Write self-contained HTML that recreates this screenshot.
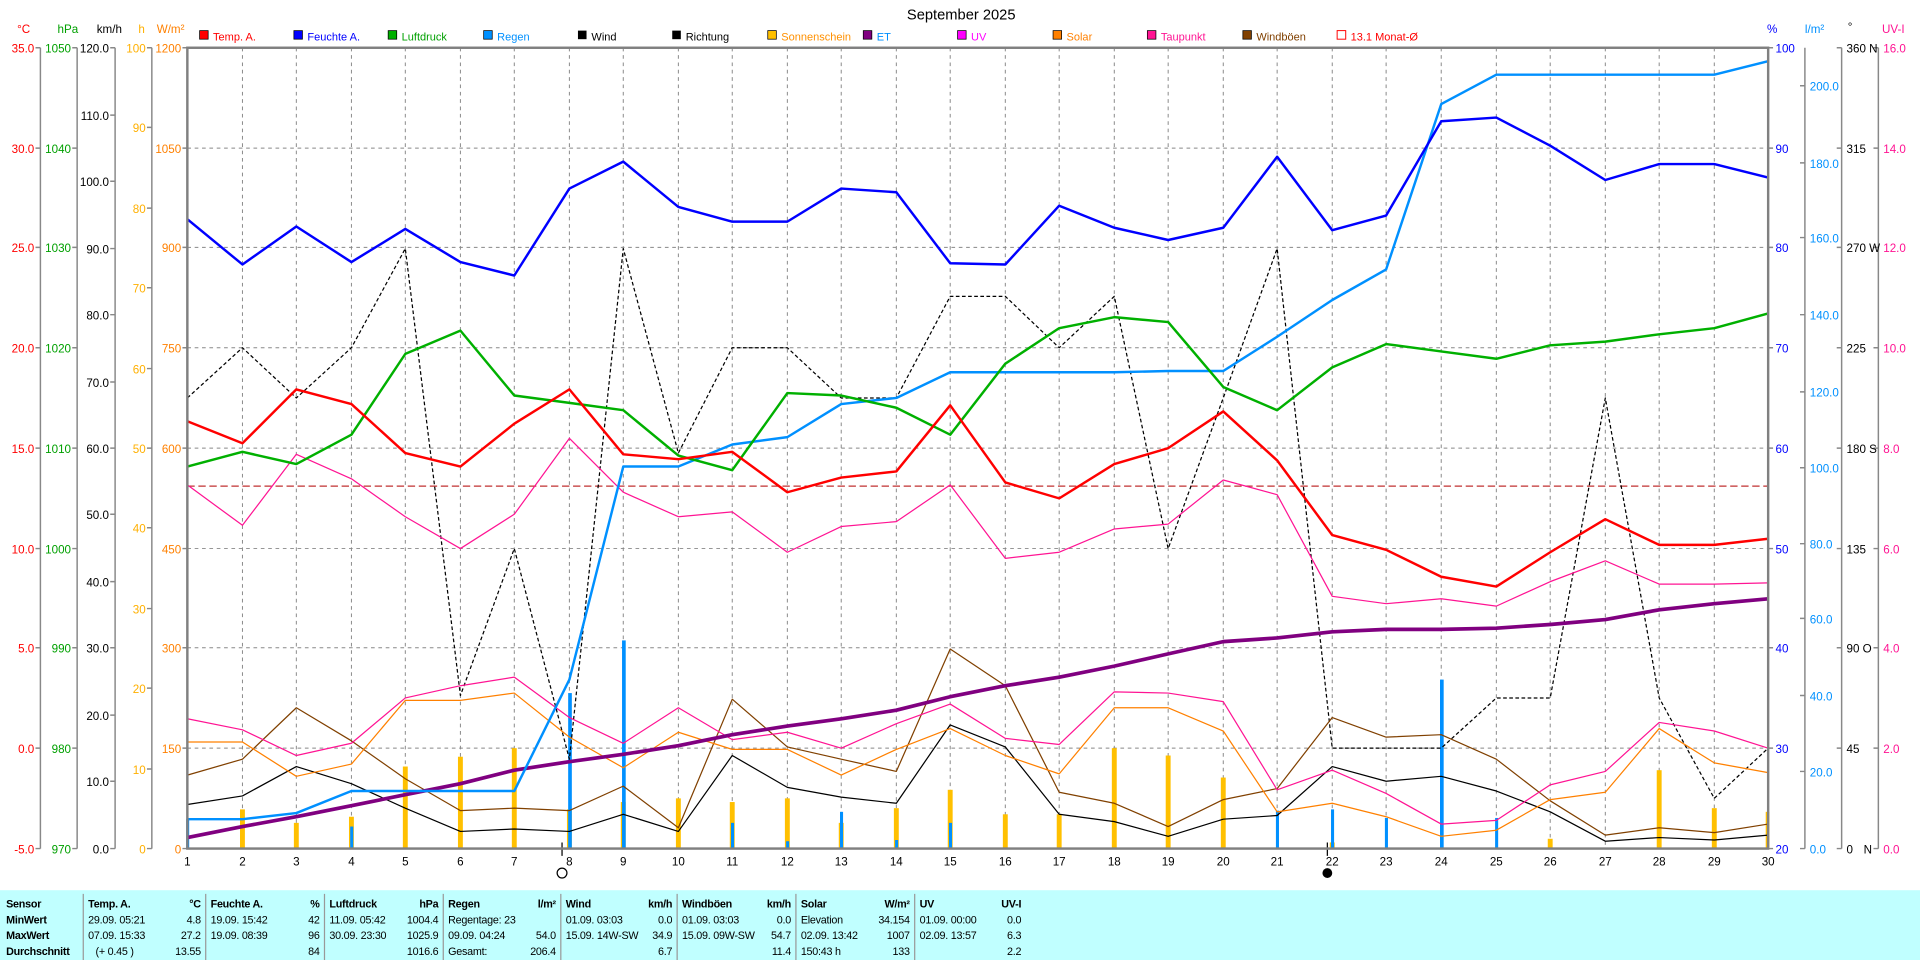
<!DOCTYPE html>
<html><head><meta charset="utf-8"><style>
html,body{margin:0;padding:0;background:#fff;width:1920px;height:960px;overflow:hidden}
svg{display:block;font-family:"Liberation Sans",sans-serif}
</style></head><body>
<svg width="1920" height="960" viewBox="0 0 1568 784" preserveAspectRatio="none" xmlns="http://www.w3.org/2000/svg">
<rect width="1568" height="784" fill="#fff"/>
<text x="785" y="16" font-size="12" text-anchor="middle">September 2025</text>
<g font-size="9">
<rect x="163" y="25" width="7" height="7" fill="#f00" stroke="#000" stroke-width=".6"/><text x="174" y="33" fill="#f00">Temp. A.</text>
<rect x="240" y="25" width="7" height="7" fill="#00f" stroke="#000" stroke-width=".6"/><text x="251" y="33" fill="#00f">Feuchte A.</text>
<rect x="317" y="25" width="7" height="7" fill="#00b000" stroke="#000" stroke-width=".6"/><text x="328" y="33" fill="#00a000">Luftdruck</text>
<rect x="395" y="25" width="7" height="7" fill="#0090ff" stroke="#000" stroke-width=".6"/><text x="406" y="33" fill="#0090ff">Regen</text>
<rect x="472" y="25" width="7" height="7" fill="#000"/><text x="483" y="33">Wind</text>
<rect x="549" y="25" width="7" height="7" fill="#000"/><text x="560" y="33">Richtung</text>
<rect x="627" y="25" width="7" height="7" fill="#ffc000" stroke="#000" stroke-width=".6"/><text x="638" y="33" fill="#ff9000">Sonnenschein</text>
<rect x="705" y="25" width="7" height="7" fill="#800080" stroke="#000" stroke-width=".6"/><text x="716" y="33" fill="#0090ff">ET</text>
<rect x="782" y="25" width="7" height="7" fill="#ff00ff" stroke="#000" stroke-width=".6"/><text x="793" y="33" fill="#ff00ff">UV</text>
<rect x="860" y="25" width="7" height="7" fill="#ff8000" stroke="#000" stroke-width=".6"/><text x="871" y="33" fill="#ff8000">Solar</text>
<rect x="937" y="25" width="7" height="7" fill="#ff1493" stroke="#000" stroke-width=".6"/><text x="948" y="33" fill="#ff1493">Taupunkt</text>
<rect x="1015" y="25" width="7" height="7" fill="#804000" stroke="#000" stroke-width=".6"/><text x="1026" y="33" fill="#804000">Windböen</text>
<rect x="1092" y="25" width="7" height="7" fill="#fff" stroke="#f00" stroke-width=".8"/><text x="1103" y="33" fill="#f00">13.1 Monat-Ø</text>
</g>
<g stroke="#888" stroke-width=".8" stroke-dasharray="3,3">
<path d="M153 121H1444M153 202H1444M153 284H1444M153 366H1444M153 448H1444M153 529H1444M153 611H1444"/>
<path d="M198 39V693M242 39V693M287 39V693M331 39V693M376 39V693M420 39V693M465 39V693M509 39V693M554 39V693M598 39V693M643 39V693M687 39V693M732 39V693M776 39V693M821 39V693M865 39V693M910 39V693M954 39V693M999 39V693M1043 39V693M1088 39V693M1132 39V693M1177 39V693M1222 39V693M1266 39V693M1311 39V693M1355 39V693M1400 39V693"/>
</g>
<g stroke="#888" stroke-width="1.2" fill="none">
<path d="M33 39V693M63 39V693M94 39V693M124 39V693M1474 39V693M1504 39V693M1534 39V693"/>
<path d="M29 39H33M29 121H33M29 202H33M29 284H33M29 366H33M29 448H33M29 529H33M29 611H33M29 693H33"/>
<path d="M59 39H63M59 121H63M59 202H63M59 284H63M59 366H63M59 448H63M59 529H63M59 611H63M59 693H63"/>
<path d="M90 39H94M90 94H94M90 148H94M90 203H94M90 257H94M90 312H94M90 366H94M90 420H94M90 475H94M90 529H94M90 584H94M90 638H94M90 693H94"/>
<path d="M120 39H124M120 104H124M120 170H124M120 235H124M120 301H124M120 366H124M120 431H124M120 497H124M120 562H124M120 628H124M120 693H124"/>
<path d="M149 39H153M149 121H153M149 202H153M149 284H153M149 366H153M149 448H153M149 529H153M149 611H153M149 693H153"/>
<path d="M1444 39H1448M1444 121H1448M1444 202H1448M1444 284H1448M1444 366H1448M1444 448H1448M1444 529H1448M1444 611H1448M1444 693H1448"/>
<path d="M1470 70H1474M1470 133H1474M1470 194H1474M1470 257H1474M1470 320H1474M1470 382H1474M1470 444H1474M1470 505H1474M1470 568H1474M1470 630H1474M1470 693H1474"/>
<path d="M1500 39H1504M1500 121H1504M1500 202H1504M1500 284H1504M1500 366H1504M1500 448H1504M1500 529H1504M1500 611H1504M1500 693H1504"/>
<path d="M1530 39H1534M1530 121H1534M1530 202H1534M1530 284H1534M1530 366H1534M1530 448H1534M1530 529H1534M1530 611H1534M1530 693H1534"/>
</g>
<g font-size="9.5" text-anchor="end">
<g fill="#f00"><text x="28" y="43">35.0</text><text x="28" y="125">30.0</text><text x="28" y="206">25.0</text><text x="28" y="288">20.0</text><text x="28" y="370">15.0</text><text x="28" y="452">10.0</text><text x="28" y="533">5.0</text><text x="28" y="615">0.0</text><text x="28" y="697">-5.0</text></g>
<g fill="#00a000"><text x="58" y="43">1050</text><text x="58" y="125">1040</text><text x="58" y="206">1030</text><text x="58" y="288">1020</text><text x="58" y="370">1010</text><text x="58" y="452">1000</text><text x="58" y="533">990</text><text x="58" y="615">980</text><text x="58" y="697">970</text></g>
<g fill="#000"><text x="89" y="43">120.0</text><text x="89" y="98">110.0</text><text x="89" y="152">100.0</text><text x="89" y="207">90.0</text><text x="89" y="261">80.0</text><text x="89" y="316">70.0</text><text x="89" y="370">60.0</text><text x="89" y="424">50.0</text><text x="89" y="479">40.0</text><text x="89" y="533">30.0</text><text x="89" y="588">20.0</text><text x="89" y="642">10.0</text><text x="89" y="697">0.0</text></g>
<g fill="#ffb000"><text x="119" y="43">100</text><text x="119" y="108">90</text><text x="119" y="174">80</text><text x="119" y="239">70</text><text x="119" y="305">60</text><text x="119" y="370">50</text><text x="119" y="435">40</text><text x="119" y="501">30</text><text x="119" y="566">20</text><text x="119" y="632">10</text><text x="119" y="697">0</text></g>
<g fill="#ff8000"><text x="148" y="43">1200</text><text x="148" y="125">1050</text><text x="148" y="206">900</text><text x="148" y="288">750</text><text x="148" y="370">600</text><text x="148" y="452">450</text><text x="148" y="533">300</text><text x="148" y="615">150</text><text x="148" y="697">0</text></g>
</g>
<g font-size="9.5">
<text x="14" y="27" fill="#f00">°C</text><text x="47" y="27" fill="#00a000">hPa</text><text x="79" y="27">km/h</text><text x="113" y="27" fill="#ffb000">h</text><text x="128" y="27" fill="#ff8000">W/m²</text>
<text x="1443" y="27" fill="#00f">%</text><text x="1474" y="27" fill="#0090ff">l/m²</text><text x="1509" y="25">°</text><text x="1537" y="27" fill="#ff1493">UV-I</text>
<g fill="#00f"><text x="1450" y="43">100</text><text x="1450" y="125">90</text><text x="1450" y="206">80</text><text x="1450" y="288">70</text><text x="1450" y="370">60</text><text x="1450" y="452">50</text><text x="1450" y="533">40</text><text x="1450" y="615">30</text><text x="1450" y="697">20</text></g>
<g fill="#0090ff"><text x="1478" y="74">200.0</text><text x="1478" y="137">180.0</text><text x="1478" y="198">160.0</text><text x="1478" y="261">140.0</text><text x="1478" y="324">120.0</text><text x="1478" y="386">100.0</text><text x="1478" y="448">80.0</text><text x="1478" y="509">60.0</text><text x="1478" y="572">40.0</text><text x="1478" y="634">20.0</text><text x="1478" y="697">0.0</text></g>
<g><text x="1508" y="43">360 N</text><text x="1508" y="125">315</text><text x="1508" y="206">270 W</text><text x="1508" y="288">225</text><text x="1508" y="370">180 S</text><text x="1508" y="452">135</text><text x="1508" y="533">90 O</text><text x="1508" y="615">45</text><text x="1508" y="697">0</text><text x="1522" y="697">N</text></g>
<g fill="#ff1493"><text x="1538" y="43">16.0</text><text x="1538" y="125">14.0</text><text x="1538" y="206">12.0</text><text x="1538" y="288">10.0</text><text x="1538" y="370">8.0</text><text x="1538" y="452">6.0</text><text x="1538" y="533">4.0</text><text x="1538" y="615">2.0</text><text x="1538" y="697">0.0</text></g>
</g>
<g font-size="9.5" text-anchor="middle">
<text x="153" y="707">1</text><text x="198" y="707">2</text><text x="242" y="707">3</text><text x="287" y="707">4</text><text x="331" y="707">5</text><text x="376" y="707">6</text><text x="420" y="707">7</text><text x="465" y="707">8</text><text x="509" y="707">9</text><text x="554" y="707">10</text><text x="598" y="707">11</text><text x="643" y="707">12</text><text x="687" y="707">13</text><text x="732" y="707">14</text><text x="776" y="707">15</text><text x="821" y="707">16</text><text x="865" y="707">17</text><text x="910" y="707">18</text><text x="954" y="707">19</text><text x="999" y="707">20</text><text x="1043" y="707">21</text><text x="1088" y="707">22</text><text x="1132" y="707">23</text><text x="1177" y="707">24</text><text x="1222" y="707">25</text><text x="1266" y="707">26</text><text x="1311" y="707">27</text><text x="1355" y="707">28</text><text x="1400" y="707">29</text><text x="1444" y="707">30</text>
</g>
<path d="M459 688V699M1084 688V699" stroke="#000"/>
<circle cx="459" cy="713" r="4" fill="none" stroke="#000"/>
<circle cx="1084" cy="713" r="4" fill="#000"/>
<g fill="#ffc000">
<rect x="196" y="661" width="4" height="32"/><rect x="240" y="672" width="4" height="21"/><rect x="285" y="667" width="4" height="26"/><rect x="329" y="626" width="4" height="67"/><rect x="374" y="618" width="4" height="75"/><rect x="418" y="611" width="4" height="82"/><rect x="463" y="661" width="4" height="32"/><rect x="507" y="655" width="4" height="38"/><rect x="552" y="652" width="4" height="41"/><rect x="596" y="655" width="4" height="38"/><rect x="641" y="652" width="4" height="41"/><rect x="685" y="672" width="4" height="21"/><rect x="730" y="660" width="4" height="33"/><rect x="774" y="645" width="4" height="48"/><rect x="819" y="665" width="4" height="28"/><rect x="863" y="665" width="4" height="28"/><rect x="908" y="611" width="4" height="82"/><rect x="952" y="617" width="4" height="76"/><rect x="997" y="635" width="4" height="58"/><rect x="1086" y="688" width="4" height="5"/><rect x="1264" y="685" width="4" height="8"/><rect x="1353" y="629" width="4" height="64"/><rect x="1398" y="660" width="4" height="33"/><rect x="1442" y="663" width="3" height="30"/>
</g>
<g fill="#0090ff">
<rect x="152" y="669" width="2.5" height="24"/><rect x="286" y="675" width="2.5" height="18"/><rect x="464" y="566" width="3" height="127"/><rect x="508" y="523" width="3" height="170"/><rect x="597" y="672" width="2.5" height="21"/><rect x="642" y="687" width="2.5" height="6"/><rect x="686" y="663" width="2.5" height="30"/><rect x="731" y="686" width="2.5" height="7"/><rect x="775" y="672" width="2.5" height="21"/><rect x="1042" y="662" width="2.5" height="31"/><rect x="1087" y="661" width="2.5" height="32"/><rect x="1131" y="668" width="2.5" height="25"/><rect x="1176" y="555" width="3" height="138"/><rect x="1221" y="668" width="2.5" height="25"/>
</g>
<g fill="none" stroke-linejoin="round">
<path d="M153 397H1444" stroke="#c03030" stroke-width="1" stroke-dasharray="6,3"/>
<polyline stroke="#000" stroke-width="1" stroke-dasharray="3,2" points="153,325 198,284 242,325 287,284 331,203 376,568 420,448 465,620 509,203 554,370 598,284 643,284 687,325 732,325 776,242 821,242 865,284 910,242 954,448 999,325 1043,203 1088,611 1132,611 1177,611 1222,570 1266,570 1311,325 1355,570 1400,652 1444,611"/>
<polyline stroke="#000" stroke-width="1" points="153,657 198,650 242,626 287,640 331,660 376,679 420,677 465,679 509,665 554,679 598,617 643,643 687,651 732,656 776,592 821,610 865,665 910,671 954,683 999,669 1043,666 1088,626 1132,638 1177,634 1222,646 1266,663 1311,687 1355,684 1400,686 1444,682"/>
<polyline stroke="#804000" stroke-width="1" points="153,633 198,620 242,578 287,605 331,636 376,662 420,660 465,662 509,642 554,676 598,571 643,610 687,620 732,630 776,530 821,560 865,647 910,656 954,675 999,653 1043,644 1088,586 1132,602 1177,600 1222,620 1266,654 1311,682 1355,676 1400,680 1444,673"/>
<polyline stroke="#ff8000" stroke-width="1" points="153,606 198,606 242,634 287,624 331,572 376,572 420,566 465,602 509,627 554,598 598,612 643,612 687,633 732,612 776,595 821,617 865,632 910,578 954,578 999,597 1043,663 1088,656 1132,667 1177,683 1222,678 1266,653 1311,647 1355,595 1400,623 1444,631"/>
<polyline stroke="#ff1493" stroke-width="1" points="153,587 198,596 242,617 287,607 331,570 376,560 420,553 465,586 509,607 554,578 598,604 643,598 687,611 732,591 776,575 821,603 865,608 910,565 954,566 999,573 1043,645 1088,629 1132,648 1177,673 1222,670 1266,641 1311,630 1355,590 1400,597 1444,611"/>
<polyline stroke="#ff1493" stroke-width="1" points="153,396 198,429 242,371 287,391 331,422 376,448 420,420 465,358 509,402 554,422 598,418 643,451 687,430 732,426 776,396 821,456 865,451 910,432 954,428 999,392 1043,404 1088,487 1132,493 1177,489 1222,495 1266,475 1311,458 1355,477 1400,477 1444,476"/>
<polyline stroke="#800080" stroke-width="3" points="153,684 198,675 242,667 287,658 331,649 376,640 420,629 465,622 509,616 554,609 598,600 643,593 687,587 732,580 776,569 821,560 865,553 910,544 954,534 999,524 1043,521 1088,516 1132,514 1177,514 1222,513 1266,510 1311,506 1355,498 1400,493 1444,489"/>
<polyline stroke="#0090ff" stroke-width="2" points="153,669 198,669 242,664 287,646 331,646 376,646 420,646 465,555 509,381 554,381 598,363 643,357 687,330 732,325 776,304 821,304 865,304 910,304 954,303 999,303 1043,275 1088,245 1132,220 1177,85 1222,61 1266,61 1311,61 1355,61 1400,61 1444,50"/>
<polyline stroke="#00b000" stroke-width="2" points="153,381 198,369 242,379 287,355 331,289 376,270 420,323 465,329 509,335 554,372 598,384 643,321 687,323 732,333 776,355 821,297 865,268 910,259 954,263 999,316 1043,335 1088,300 1132,281 1177,287 1222,293 1266,282 1311,279 1355,273 1400,268 1444,256"/>
<polyline stroke="#00f" stroke-width="2" points="153,179 198,216 242,185 287,214 331,187 376,214 420,225 465,154 509,132 554,169 598,181 643,181 687,154 732,157 776,215 821,216 865,168 910,186 954,196 999,186 1043,128 1088,188 1132,176 1177,99 1222,96 1266,119 1311,147 1355,134 1400,134 1444,145"/>
<polyline stroke="#f00" stroke-width="2" points="153,344 198,362 242,318 287,330 331,370 376,381 420,346 465,318 509,371 554,375 598,369 643,402 687,390 732,385 776,331 821,394 865,407 910,379 954,366 999,336 1043,376 1088,437 1132,449 1177,471 1222,479 1266,451 1311,424 1355,445 1400,445 1444,440"/>
</g>
<rect x="153" y="39" width="1291" height="654" fill="none" stroke="#808080" stroke-width="2"/>
<rect x="0" y="727" width="1568" height="57" fill="#c0ffff"/>
<g stroke="#999" stroke-width="1"><path d="M68 730V784M168 730V784M265 730V784M362 730V784M458 730V784M553 730V784M650 730V784M747 730V784"/></g>
<g font-size="8.8" letter-spacing="-0.2">
<g font-weight="bold"><text x="5" y="741">Sensor</text><text x="5" y="754">MinWert</text><text x="5" y="767">MaxWert</text><text x="5" y="780">Durchschnitt</text>
<text x="72" y="741">Temp. A.</text><text x="172" y="741">Feuchte A.</text><text x="269" y="741">Luftdruck</text><text x="366" y="741">Regen</text><text x="462" y="741">Wind</text><text x="557" y="741">Windböen</text><text x="654" y="741">Solar</text><text x="751" y="741">UV</text></g>
<g text-anchor="end" font-weight="bold"><text x="164" y="741">°C</text><text x="261" y="741">%</text><text x="358" y="741">hPa</text><text x="454" y="741">l/m²</text><text x="549" y="741">km/h</text><text x="646" y="741">km/h</text><text x="743" y="741">W/m²</text><text x="834" y="741">UV-I</text></g>
<text x="72" y="754">29.09.  05:21</text><text x="72" y="767">07.09.  15:33</text><text x="78" y="780">(+ 0.45 )</text>
<text x="172" y="754">19.09.  15:42</text><text x="172" y="767">19.09.  08:39</text>
<text x="269" y="754">11.09.  05:42</text><text x="269" y="767">30.09.  23:30</text>
<text x="366" y="754">Regentage: 23</text><text x="366" y="767">09.09.  04:24</text><text x="366" y="780">Gesamt:</text>
<text x="462" y="754">01.09.  03:03</text><text x="462" y="767">15.09. 14W-SW</text>
<text x="557" y="754">01.09.  03:03</text><text x="557" y="767">15.09. 09W-SW</text>
<text x="654" y="754">Elevation</text><text x="654" y="767">02.09.  13:42</text><text x="654" y="780">150:43 h</text>
<text x="751" y="754">01.09.  00:00</text><text x="751" y="767">02.09.  13:57</text>
<g text-anchor="end">
<text x="164" y="754">4.8</text><text x="164" y="767">27.2</text><text x="164" y="780">13.55</text>
<text x="261" y="754">42</text><text x="261" y="767">96</text><text x="261" y="780">84</text>
<text x="358" y="754">1004.4</text><text x="358" y="767">1025.9</text><text x="358" y="780">1016.6</text>
<text x="454" y="767">54.0</text><text x="454" y="780">206.4</text>
<text x="549" y="754">0.0</text><text x="549" y="767">34.9</text><text x="549" y="780">6.7</text>
<text x="646" y="754">0.0</text><text x="646" y="767">54.7</text><text x="646" y="780">11.4</text>
<text x="743" y="754">34.154</text><text x="743" y="767">1007</text><text x="743" y="780">133</text>
<text x="834" y="754">0.0</text><text x="834" y="767">6.3</text><text x="834" y="780">2.2</text>
</g>
</g>
</svg>
</body></html>
